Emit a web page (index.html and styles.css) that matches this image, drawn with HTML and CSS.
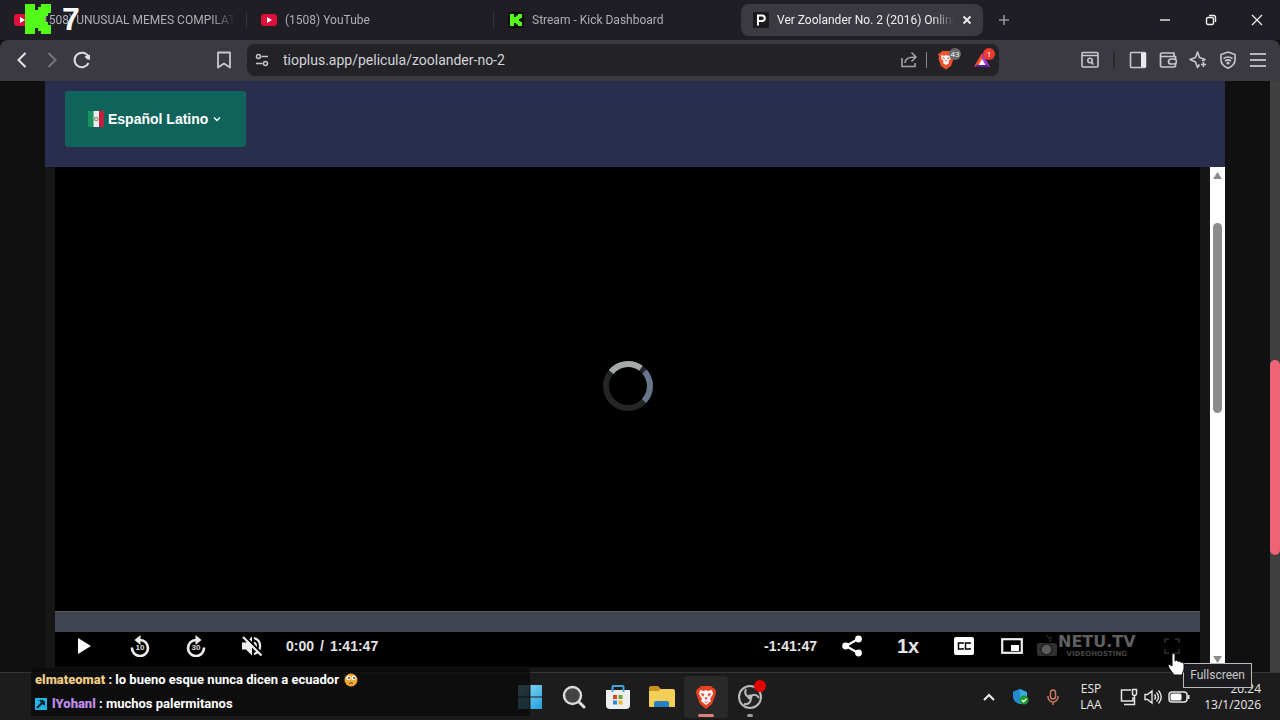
FILE: index.html
```html
<!DOCTYPE html>
<html lang="es">
<head>
    <meta charset="UTF-8">
    <meta name="viewport" content="width=device-width, initial-scale=1.0">
    <title>Ver Zoolander No. 2 (2016) Online</title>
    <link rel="stylesheet" href="styles.css">
</head>
<body>
    <!-- Tabs -->
    <header class="tab-strip">
        <div class="tabs">
            <button class="tab">
                <svg class="favicon" viewBox="0 0 16 16"><rect y="2" width="16" height="12" rx="3" fill="#e0103c"/><path d="M6 5l5 3-5 3z" fill="#fff"/></svg>
                <span class="tab-title">(1508) UNUSUAL MEMES COMPILATION</span>
            </button>
            <button class="tab">
                <svg class="favicon" viewBox="0 0 16 16"><rect y="2" width="16" height="12" rx="3" fill="#e0103c"/><path d="M6 5l5 3-5 3z" fill="#fff"/></svg>
                <span class="tab-title">(1508) YouTube</span>
            </button>
            <button class="tab">
                <svg class="favicon" viewBox="0 0 16 16"><path d="M0 0h16v16H0z" fill="#0b0b0b"/><path d="M2 2h4v3h2V3.500h2V2h4v4h-1.500v1H11v2h1.500v1H14v4h-4v-1.500H8V11H6v3H2z" fill="#53fc18"/></svg>
                <span class="tab-title">Stream - Kick Dashboard</span>
            </button>
            <button class="tab active">
                <svg class="favicon" viewBox="0 0 16 16"><path d="M0 0h16v16H0z" fill="#1b1b1e"/><path d="M5 13.500V3.500h4a2.800 2.800 0 0 1 0 5.600H5" fill="none" stroke="#fff" stroke-width="2"/></svg>
                <span class="tab-title">Ver Zoolander No. 2 (2016) Online</span>
                <svg class="tab-close" viewBox="0 0 10 10"><path d="M1.500 1.500l7 7m0-7l-7 7" stroke="#eee" stroke-width="1.800"/></svg>
            </button>
            <button class="new-tab" aria-label="New tab"><svg width="12" height="12" viewBox="0 0 12 12"><path d="M6 1v10M1 6h10" stroke="#97969c" stroke-width="1.600"/></svg></button>
        </div>
        <div class="window-buttons">
            <button aria-label="Minimize"><svg width="12" height="12" viewBox="0 0 12 12"><path d="M1 6h10" stroke="#eee" stroke-width="1.400"/></svg></button>
            <button aria-label="Restore"><svg width="12" height="12" viewBox="0 0 12 12" fill="none" stroke="#eee" stroke-width="1.400"><rect x="1.500" y="3.500" width="7" height="7" rx="1.500"/><path d="M4 1.500h4.500a2 2 0 0 1 2 2V8"/></svg></button>
            <button aria-label="Close"><svg width="12" height="12" viewBox="0 0 12 12"><path d="M1 1l10 10m0-10L1 11" stroke="#eee" stroke-width="1.300"/></svg></button>
        </div>
    </header>

    <!-- Toolbar -->
    <nav class="toolbar">
        <div class="nav-buttons">
            <button aria-label="Back"><svg width="18" height="18" viewBox="0 0 18 18"><path d="M12.500 2L5.500 9l7 7" fill="none" stroke="#e6e5ea" stroke-width="2"/></svg></button>
            <button aria-label="Forward"><svg width="18" height="18" viewBox="0 0 18 18"><path d="M5.500 2l7 7-7 7" fill="none" stroke="#76757b" stroke-width="2"/></svg></button>
            <button aria-label="Reload"><svg width="18" height="18" viewBox="0 0 18 18"><path d="M15.500 12A7.300 7.300 0 1 1 15.300 5.500" fill="none" stroke="#dddce2" stroke-width="2"/><path d="M11.500 5.500l5.500-2v5q-3 1-5.500-3z" fill="#dddce2"/></svg></button>
            <button class="bookmark" aria-label="Bookmark"><svg width="18" height="18" viewBox="0 0 18 18"><path d="M3 1.500h12v15l-6-4-6 4z" fill="none" stroke="#c9c8ce" stroke-width="1.800" stroke-linejoin="round"/></svg></button>
        </div>
        <div class="address-bar">
            <svg width="14" height="14" viewBox="0 0 14 14" fill="none" stroke="#c6c5cb" stroke-width="1.500"><circle cx="3.500" cy="3.500" r="2"/><path d="M6.500 3.500H13M1 10.500h6.500"/><circle cx="10.500" cy="10.500" r="2"/></svg>
            <input type="text" aria-label="Address" value="tioplus.app/pelicula/zoolander-no-2">
            <button aria-label="Share"><svg width="18" height="18" viewBox="0 0 18 18" fill="none" stroke="#a3a2a8" stroke-width="1.600"><path d="M2 7v8.500h13V12"/><path d="M5 12c0-4 3-6 10-6M11.500 1.500L16 6l-4.500 4.500"/></svg></button>
            <span class="address-divider"></span>
            <button class="shield" aria-label="Brave Shields">
                <svg width="18" height="20" viewBox="0 0 18 20"><path d="M5 1h8l2 2 2 1-1 3 .5 2-2.500 7L9 19.500 4 16 1.500 9 2 7 1 4l2-1z" fill="#f0502b"/><path d="M4 5l3 .7L9 5l2 .7L14 5l-.5 4-2 2 .5 2-3 2-3-2 .5-2-2-2z" fill="#fff"/><path d="M5 7l3 1-1 1.500zM13 7l-3 1 1 1.500zM8 10h2l-1 2z" fill="#f0502b"/></svg>
                <span class="badge">43</span>
            </button>
            <button class="rewards" aria-label="Brave Rewards">
                <svg width="18" height="18" viewBox="0 0 18 18"><path d="M9 2L1 16h16z" fill="#a33ad1"/><path d="M9 2L1 16l8-5z" fill="#ff4a1c"/><path d="M1 16h16l-8-5z" fill="#52229b"/><path d="M9 8l-3.500 6h7z" fill="#fff"/></svg>
                <span class="badge badge-red">1</span>
            </button>
        </div>
        <div class="tool-buttons">
            <button aria-label="Search tabs"><svg width="18" height="18" viewBox="0 0 18 18" fill="none" stroke="#c9c8ce" stroke-width="1.600"><rect x="1" y="1.500" width="16" height="14.500" rx="1"/><path d="M1 4.500h16M10.500 11.500l2 2"/><circle cx="9" cy="9.500" r="2.200"/></svg></button>
            <span class="tool-divider"></span>
            <button aria-label="Sidebar"><svg width="18" height="18" viewBox="0 0 18 18"><rect x="1.500" y="1.500" width="15" height="15" rx="1" fill="none" stroke="#c9c8ce" stroke-width="1.600"/><path d="M12 2h5v14h-5z" fill="#eae9ee"/></svg></button>
            <button aria-label="Wallet"><svg width="18" height="18" viewBox="0 0 18 18" fill="none" stroke="#c9c8ce" stroke-width="1.700"><path d="M16.500 8V5.500H3a1.500 1.500 0 0 1-1.500-2C1.500 2 2.500 2 3 2h12v3M1.500 4v10.500c0 1 .5 1.500 1.500 1.500h12c1 0 1.500-.5 1.500-1.500V13"/><rect x="9.500" y="8" width="8" height="5" rx="2.500"/></svg></button>
            <button aria-label="Leo AI"><svg width="18" height="18" viewBox="0 0 18 18" fill="none" stroke="#c9c8ce" stroke-width="1.600" stroke-linejoin="round"><path d="M10.500 13.500l-2 3-2-5.500-5.500-2.500 5.500-2 2-5.500 2 5.500 5.500 2-3 1.500"/><path d="M14.500 11v5M12 13.500h5"/></svg></button>
            <button aria-label="VPN"><svg width="18" height="18" viewBox="0 0 18 18" fill="none" stroke="#c9c8ce" stroke-width="1.600"><path d="M9 1l7 2.500V9c0 4-3 6.500-7 8.200C5 15.500 2 13 2 9V3.500z"/><path d="M4.500 7.500c3-2 6-2 9 0M6 10c2-1.500 4-1.500 6 0"/><circle cx="9" cy="12" r=".8"/></svg></button>
            <button aria-label="Menu"><svg width="18" height="18" viewBox="0 0 18 18"><path d="M1 3h16M1 9h16M1 15h16" stroke="#b7b6bc" stroke-width="1.800"/></svg></button>
        </div>
    </nav>

    <!-- Page -->
    <div class="viewport">
        <main class="page">
            <div class="language-bar">
                <label class="language">
                    <svg width="16" height="16" viewBox="0 0 16 16"><path d="M0 0h5.500v16H0z" fill="#16935f"/><path d="M5.500 0h5.500v16H5.500z" fill="#eee"/><path d="M11 0h5v16h-5z" fill="#c41f3f"/><circle cx="8.200" cy="8" r="1.700" fill="none" stroke="#8b9a78" stroke-width="1.200"/></svg>
                    <select aria-label="Idioma">
                        <option>Español Latino</option>
                    </select>
                    <svg class="chevron" width="8" height="8" viewBox="0 0 8 8"><path d="M1 2.500l3 3 3-3" fill="none" stroke="#fff" stroke-width="1.400"/></svg>
                </label>
            </div>
            <div class="frame">
                <section class="player">
                    <div class="video">
                        <svg class="spinner" viewBox="0 0 52 52" fill="none" stroke-width="6">
                            <circle cx="26" cy="26" r="22" stroke="#232527"/>
                            <path d="M9.100 12A22 22 0 0 1 39 8.200" stroke="#a5a9aa"/>
                            <path d="M42.500 11.500A22 22 0 0 1 42 41" stroke="#66758a"/>
                        </svg>
                    </div>
                    <input class="seek" type="range" min="0" max="6107" value="0" aria-label="Seek">
                    <div class="controls">
                        <button aria-label="Play"><svg width="20" height="20" viewBox="0 0 20 20"><path d="M4 2l13 8-13 8z" fill="#fff"/></svg></button>
                        <button aria-label="Rewind 10 seconds"><svg width="20" height="22" viewBox="0 0 20 22"><path d="M2 12.500A8 8 0 1 0 10 5" fill="none" stroke="#eee" stroke-width="2.600"/><path d="M10.500 0v10L4.500 5z" fill="#eee"/><text x="10" y="15" class="skip-label">10</text></svg></button>
                        <button aria-label="Forward 30 seconds"><svg width="20" height="22" viewBox="0 0 20 22"><path d="M18 12.500A8 8 0 1 1 10 5" fill="none" stroke="#eee" stroke-width="2.600"/><path d="M9.500 0v10l6-5z" fill="#eee"/><text x="10" y="15" class="skip-label">30</text></svg></button>
                        <button aria-label="Unmute"><svg width="22" height="22" viewBox="0 0 22 22"><path d="M1 7.500h4l6-6v19l-6-6H1z" fill="#eee"/><path d="M13 7.500a4 4 0 0 1 0 7M13 3a8.300 8.300 0 0 1 0 16" fill="none" stroke="#eee" stroke-width="2.200"/><path d="M3.500 1L22 19.500" stroke="#000" stroke-width="2"/><path d="M2 2l18.500 18.500" stroke="#eee" stroke-width="2.200"/></svg></button>
                        <span class="time">0:00<span class="slash">/</span>1:41:47</span>
                        <span class="remaining">-1:41:47</span>
                        <button aria-label="Share"><svg width="20" height="22" viewBox="0 0 20 22" fill="#fff"><path d="M16 4L4 11l12 7" fill="none" stroke="#fff" stroke-width="2.200"/><circle cx="16.500" cy="4" r="3.400"/><circle cx="3.600" cy="11" r="3.400"/><circle cx="16.500" cy="18" r="3.400"/></svg></button>
                        <button class="rate">1x</button>
                        <button aria-label="Captions"><svg width="20" height="18" viewBox="0 0 20 18"><rect width="20" height="18" rx="2" fill="#fff"/><path d="M9 7V6H4.500v6H9v-1M16 7V6h-4.500v6H16v-1" fill="none" stroke="#000" stroke-width="1.500"/></svg></button>
                        <button class="pip" aria-label="Picture in picture"><svg width="22" height="16" viewBox="0 0 22 16"><rect x="1.200" y="1.200" width="19.600" height="13.600" fill="none" stroke="#eee" stroke-width="2.200"/><path d="M10 7h8v6h-8z" fill="#fff"/></svg></button>
                        <a class="logo" href="#" aria-label="NETU.TV">
                            <svg width="22" height="24" viewBox="0 0 22 24"><path d="M1 11q0-2 2-2h14q4 0 4 3v8q0 2-2 2H3q-2 0-2-2z" fill="#303030"/><circle cx="10.500" cy="15.500" r="5.500" fill="#5c5c5c" stroke="#222" stroke-width="1.500"/><path d="M14 8l1-6M11 1l2 4" stroke="#262626" stroke-width="1.500"/></svg>
                            <span class="logo-text"><b>NETU.TV</b><small>VIDEOHOSTING</small></span>
                        </a>
                        <button class="fullscreen" aria-label="Fullscreen"><svg width="16" height="16" viewBox="0 0 16 16"><path d="M1 5V1h4M11 1h4v4M15 11v4h-4M5 15H1v-4" fill="none" stroke="#242424" stroke-width="2"/></svg></button>
                    </div>
                </section>
                <div class="frame-scroll">
                    <svg width="9" height="7" viewBox="0 0 10 8"><path d="M5 0l5 8H0z" fill="#8c8c8c"/></svg>
                    <div class="frame-track"><div class="frame-thumb"></div></div>
                    <svg width="9" height="7" viewBox="0 0 10 8"><path d="M0 0h10L5 8z" fill="#8c8c8c"/></svg>
                </div>
            </div>
        </main>
        <div class="page-scroll"><div class="page-thumb"></div></div>
    </div>

    <!-- Windows taskbar -->
    <footer class="taskbar">
        <div class="apps">
            <button aria-label="Start"><svg width="24" height="24" viewBox="0 0 24 24"><defs><linearGradient id="win" x1="0" y1="0" x2="1" y2="1"><stop offset="0" stop-color="#9be3f6"/><stop offset="1" stop-color="#209fdc"/></linearGradient></defs><path d="M0 0h11.500v11.500H0zM12.500 0H24v11.500H12.500zM0 12.500h11.500V24H0zM12.500 12.500H24V24H12.500z" fill="url(#win)"/></svg></button>
            <button aria-label="Search"><svg width="24" height="24" viewBox="0 0 24 24"><path d="M16 16l6 6" stroke="#ddd" stroke-width="3" stroke-linecap="round"/><circle cx="10.500" cy="10.500" r="8.500" fill="#434343" stroke="#ddd" stroke-width="2.400"/></svg></button>
            <button aria-label="Store"><svg width="24" height="26" viewBox="0 0 24 26"><path d="M0 6h24v15q0 4-4 4H4q-4 0-4-4z" fill="#eee"/><path d="M6.500 8V3q0-1 1-1h9q1 0 1 1v5" fill="none" stroke="#3fa9dc" stroke-width="2"/><path d="M7 11h4v4H7z" fill="#d9482b"/><path d="M12.500 11h4v4h-4z" fill="#69a832"/><path d="M7 16.500h4v4H7z" fill="#268bd0"/><path d="M12.500 16.500h4v4h-4z" fill="#eeb52a"/></svg></button>
            <button aria-label="Files"><svg width="26" height="24" viewBox="0 0 26 24"><path d="M0 3q0-2 2-2h7l3 3v6H0z" fill="#c6931c"/><path d="M0 6h9l3-2h12q2 0 2 2v15q0 1-1 1H1q-1 0-1-1z" fill="#f3cf58"/><path d="M5 22v-4q0-2 2-2h11q2 0 2 2v4z" fill="#267fc3"/></svg></button>
            <button class="running current" aria-label="Brave"><svg width="22" height="24" viewBox="0 0 22 24"><path d="M6 1h10l2 2 2 1 1 3-1 4-3 8-6 5-6-5-3-8-1-4 1-3 2-1z" fill="#ed4023"/><path d="M5 5l4 1 2-1 2 1 4-1 1 4-3 5 1 2-5 4-5-4 1-2-3-5z" fill="#fff"/><path d="M5.500 8l4 1-1.500 3zM16.500 8l-4 1 1.500 3zM9.500 13l1.500-1 1.500 1-1.500 2zM8 16l3 1 3-1-3 2z" fill="#ed4023"/></svg></button>
            <button class="running" aria-label="OBS Studio"><svg width="26" height="26" viewBox="0 0 26 26" fill="none" stroke="#bbb" stroke-width="2"><circle cx="13" cy="13" r="11" fill="#242424"/><path d="M13 13c-4 0-6-4-4-8M13 13c2-3 7-3 9 1M13 13c2 4-1 8-6 7"/><circle cx="13" cy="13" r="1.500" fill="#bbb"/></svg><span class="rec-dot"></span></button>
        </div>
        <div class="tray">
            <button class="tray-icon" aria-label="Hidden icons"><svg width="12" height="8" viewBox="0 0 12 8"><path d="M1 7l5-5 5 5" fill="none" stroke="#eee" stroke-width="2"/></svg></button>
            <button class="tray-icon" aria-label="Security"><svg width="16" height="16" viewBox="0 0 16 16"><path d="M7 0l7 3v4c0 4-3 7-7 8C3 14 0 11 0 7V3z" fill="#36aee4"/><path d="M7 0v15C3 14 0 11 0 7V3z" fill="#248bd0"/><circle cx="11" cy="11" r="4.500" fill="#179d2e"/><path d="M8.800 11l1.700 1.700 3-3" fill="none" stroke="#fff" stroke-width="1.400"/></svg></button>
            <button class="tray-icon" aria-label="Microphone"><svg width="12" height="16" viewBox="0 0 12 16" fill="none" stroke="#c77961" stroke-width="1.500"><rect x="3.500" y="1" width="5" height="9" rx="2.500"/><path d="M1 7v1a5 5 0 0 0 10 0V7M6 13v3"/></svg></button>
            <span class="keyboard">ESP<br>LAA</span>
            <button class="status" aria-label="Network, volume and battery">
                <svg width="18" height="18" viewBox="0 0 18 18" fill="none" stroke="#e4e4e4" stroke-width="1.500"><path d="M11 2H1.500v11H13V9M4 16.500h7"/><path d="M12.500 1.500h4v4a2 2 0 0 1-4 0zM14.500 8v8.500H11"/></svg>
                <svg width="18" height="16" viewBox="0 0 18 16" fill="none" stroke="#e4e4e4" stroke-width="1.400"><path d="M1 5.500h2.500L8 2v12l-4.500-3.500H1zM10.500 5.500q2 2.500 0 5M12.500 3.500q4 4.500 0 9M14.500 1.500q5.500 6.500 0 13"/></svg>
                <svg width="22" height="12" viewBox="0 0 22 12"><rect x="1" y="1" width="18" height="10" rx="3" fill="none" stroke="#e4e4e4" stroke-width="1.500"/><rect x="2.500" y="2.500" width="11" height="7" rx="1.500" fill="#fff"/><path d="M20.500 4v4" stroke="#e4e4e4" stroke-width="2"/></svg>
            </button>
            <span class="clock">20:24<br>13/1/2026</span>
        </div>
    </footer>

    <!-- Stream overlays -->
    <div class="viewers">
        <svg width="26" height="30" viewBox="0 0 26 30"><path d="M0 0h10v6h3V3h3V0h10v9h-3v3h-3v6h3v3h3v9H16v-3h-3v-3h-3v6H0z" fill="#53fc18"/></svg>
        <span>7</span>
    </div>
    <div class="chat">
        <p><span><b class="user-gold">elmateomat</b> : lo bueno esque nunca dicen a ecuador</span>
            <svg width="14" height="14" viewBox="0 0 14 14"><circle cx="7" cy="7" r="6.500" fill="#f2a933"/><circle cx="4.500" cy="5" r="2.200" fill="#fff"/><circle cx="9.500" cy="5" r="2.200" fill="#fff"/><circle cx="5" cy="5" r=".9" fill="#432"/><circle cx="10" cy="5" r=".9" fill="#432"/><path d="M5 10.500q2-1.500 4 0" stroke="#743c14" fill="none"/></svg>
        </p>
        <p><svg width="12" height="12" viewBox="0 0 12 12"><path d="M0 0h12v12H0z" fill="#20b5e5"/><path d="M2 10l5-5" stroke="#08242f" stroke-width="2"/><path d="M4 2h4l2 2v4L7 6z" fill="#08242f"/></svg>
            <span><b class="user-purple">lYohanl</b> : muchos palermitanos</span></p>
    </div>
    <div class="tooltip">Fullscreen</div>
    <svg class="cursor" width="18" height="24" viewBox="0 0 18 24"><path d="M5 2q1.500-1.500 3 0v7l2-1 1 1.500 2-.5 1 1.500 2-.5 1 2v5l-2 6H7l-5-7-1-3q1.500-1.500 4 1z" fill="#fff" stroke="#111"/></svg>
</body>
</html>
```
FILE: styles.css
```css
* {
    margin: 0;
    padding: 0;
    box-sizing: border-box;
}

body {
    display: flex;
    flex-direction: column;
    height: 100vh;
    overflow: hidden;
    position: relative;
    background-color: #101010;
    color: #fff;
    font-family: "Open Sans", "Noto Sans", sans-serif;
    font-size: 12px;
}

button {
    display: flex;
    align-items: center;
    justify-content: center;
    position: relative;
    background: none;
    border: none;
    color: inherit;
    font: inherit;
    cursor: pointer;
}

svg {
    flex-shrink: 0;
}

/* Tabs */
.tab-strip {
    display: flex;
    height: 40px;
    background-color: #1f1e24;
    font-family: Roboto, sans-serif;
}

.tabs {
    flex: 1;
    display: flex;
    align-items: center;
    min-width: 0;
}

.tab {
    flex: 0 1 247px;
    min-width: 0;
    height: 32px;
    gap: 8px;
    padding: 0 12px 0 14px;
    justify-content: flex-start;
    color: #b0afb5;
}

.tab:nth-child(-n+2)::after {
    content: "";
    position: absolute;
    right: 0;
    width: 1px;
    height: 16px;
    background-color: #36353b;
}

.tab.active {
    flex-basis: 242px;
    padding: 0 11px 0 12px;
    border-radius: 8px;
    background-color: #3b3a40;
    color: #efeef3;
}

.favicon {
    width: 16px;
    height: 16px;
}

.tab-title {
    flex: 1;
    overflow: hidden;
    white-space: nowrap;
    text-align: left;
    mask-image: linear-gradient(to right, #000 88%, transparent);
}

.tab-close {
    width: 10px;
    height: 10px;
}

.new-tab {
    width: 42px;
    height: 32px;
}

.window-buttons {
    display: flex;
}

.window-buttons button {
    width: 46px;
}

/* Toolbar */
.toolbar {
    display: grid;
    grid-template-columns: 247px 1fr 281px;
    align-items: center;
    height: 41px;
    border-bottom: 1px solid #3b3a40;
    border-radius: 8px 8px 0 0;
    background-color: #3b3a40;
}

.nav-buttons,
.tool-buttons {
    display: flex;
    align-items: center;
    padding: 0 8px 0 7px;
}

.tool-buttons {
    justify-content: flex-end;
    padding: 0 7px;
}

.nav-buttons button,
.tool-buttons button {
    width: 30px;
    height: 30px;
}

.nav-buttons .bookmark {
    margin-left: auto;
}

.tool-divider {
    width: 2px;
    height: 16px;
    margin: 0 8px;
    background-color: #2a292e;
}

.address-bar {
    display: flex;
    align-items: center;
    height: 32px;
    padding-left: 8px;
    border-radius: 8px;
    background-color: #232227;
}

.address-bar input {
    flex: 1;
    min-width: 0;
    padding: 0 14px;
    border: none;
    outline: none;
    background: none;
    color: #d4d3d9;
    font: 14px Roboto, sans-serif;
}

.address-bar button {
    width: 34px;
    height: 32px;
}

.address-divider {
    width: 1px;
    height: 16px;
    background-color: #8a898f;
}

.address-bar .shield {
    width: 38px;
}

.badge {
    position: absolute;
    top: 4px;
    right: 4px;
    min-width: 12px;
    height: 12px;
    border-radius: 6px;
    background-color: #66686c;
    font-size: 8px;
    line-height: 12px;
}

.badge-red {
    background-color: #ee3b2f;
}

/* Page */
.viewport {
    flex: 1;
    display: flex;
    min-height: 0;
}

.page {
    flex: 1;
    display: flex;
    flex-direction: column;
    padding: 0 45px;
    background-color: #101010;
}

.language-bar {
    padding: 10px 20px 20px;
    background-color: #292e4f;
}

.language {
    display: inline-flex;
    align-items: center;
    gap: 4px;
    height: 56px;
    padding: 0 25px 0 23px;
    border-radius: 3px;
    background-color: #10635a;
    vertical-align: top;
}

.language select {
    appearance: none;
    border: none;
    background: none;
    color: #fff;
    font: bold 14px "Liberation Sans", Arial, sans-serif;
}

.frame {
    flex: 1;
    display: flex;
    min-height: 0;
    background-color: #161616;
}

.player {
    flex: 1;
    display: flex;
    flex-direction: column;
    margin: 0 10px 5px;
    background-color: #000;
}

.video {
    flex: 1;
    display: flex;
    align-items: center;
    justify-content: center;
    padding-bottom: 6px;
}

.spinner {
    width: 52px;
    height: 52px;
}

.seek {
    appearance: none;
    width: 100%;
    height: 21px;
    border-top: 1px solid #555b65;
    background-color: #3e4450;
}

.seek::-webkit-slider-thumb {
    appearance: none;
    width: 1px;
    height: 20px;
}

.controls {
    display: flex;
    align-items: center;
    height: 28px;
    margin-bottom: 7px;
    padding-left: 1px;
    font: bold 14px "Liberation Sans", Arial, sans-serif;
    color: #e4e4e4;
}

.controls button {
    width: 56px;
    height: 28px;
}

.skip-label {
    fill: #ddd;
    font-size: 8px;
    text-anchor: middle;
}

.time {
    padding-left: 6px;
}

.slash {
    padding: 0 6px;
}

.remaining {
    margin-left: auto;
    padding-right: 7px;
}

.controls .rate {
    font-size: 20px;
}

.controls .pip {
    width: 40px;
}

.logo {
    display: flex;
    align-items: center;
    width: 112px;
    padding-left: 4px;
    color: #606060;
    text-decoration: none;
}

.logo-text {
    display: flex;
    flex-direction: column;
    align-items: center;
}

.logo-text b {
    font: bold 16px/16px "DejaVu Sans", sans-serif;
}

.logo-text small {
    color: #444;
    font: bold 7px/8px "DejaVu Sans", sans-serif;
}

/* Scrollbars */
.frame-scroll {
    display: flex;
    flex-direction: column;
    align-items: center;
    width: 15px;
    padding: 5px 0 9px;
    background-color: #fff;
}

.frame-track {
    flex: 1;
    display: flex;
    flex-direction: column;
}

.frame-track::before {
    content: "";
    flex: 44;
}

.frame-track::after {
    content: "";
    flex: 243;
}

.frame-thumb {
    flex: 190;
    width: 9px;
    border-radius: 5px;
    background-color: #8c8c8c;
}

.page-scroll {
    display: flex;
    flex-direction: column;
    width: 10px;
    background-color: #404040;
}

.page-scroll::before {
    content: "";
    flex: 279;
}

.page-scroll::after {
    content: "";
    flex: 117;
}

.page-thumb {
    flex: 195;
    border-radius: 5px;
    background-color: #ed6574;
}

/* Taskbar */
.taskbar {
    display: grid;
    grid-template-columns: 1fr auto 1fr;
    height: 48px;
    border-top: 1px solid #353535;
    background-color: #1c1c1c;
}

.apps {
    grid-column: 2;
    display: flex;
    align-items: center;
}

.apps button {
    width: 44px;
    height: 42px;
    border-radius: 4px;
}

.apps .current {
    background-color: #292929;
}

.running::after {
    content: "";
    position: absolute;
    bottom: 1px;
    width: 6px;
    height: 3px;
    border-radius: 2px;
    background-color: #999;
}

.current::after {
    width: 16px;
    background-color: #e07f72;
}

.rec-dot {
    position: absolute;
    top: 4px;
    right: 6px;
    width: 12px;
    height: 12px;
    border-radius: 50%;
    background-color: #e30505;
}

.tray {
    display: flex;
    align-items: center;
    justify-content: flex-end;
    padding-right: 19px;
    line-height: 16px;
    color: #e8e8e8;
}

.tray-icon {
    width: 32px;
    height: 40px;
}

.keyboard {
    width: 44px;
    text-align: center;
}

.status {
    gap: 6px;
    padding: 0 7px;
}

.clock {
    width: 64px;
    text-align: right;
}

/* Overlays */
.viewers {
    position: absolute;
    top: 4px;
    left: 25px;
    display: flex;
    align-items: center;
    gap: 11px;
    font: bold 32px/28px "Liberation Sans", Arial, sans-serif;
}

.chat {
    position: absolute;
    left: 31px;
    bottom: 4px;
    width: 499px;
    padding: 0 4px;
    background-color: rgba(10, 10, 10, 0.8);
    font: bold 13px/24px Roboto, sans-serif;
}

.chat p {
    display: flex;
    align-items: center;
    gap: 5px;
}

.user-gold {
    color: #efcb85;
}

.user-purple {
    color: #bf8bea;
}

.tooltip {
    position: absolute;
    right: 28px;
    bottom: 32px;
    padding: 0 6px;
    border: 1px solid #bbb;
    background-color: #1c1c20;
    color: #c9c9c9;
    font: 12px/23px Roboto, sans-serif;
}

.cursor {
    position: absolute;
    right: 95px;
    bottom: 44px;
}
```
